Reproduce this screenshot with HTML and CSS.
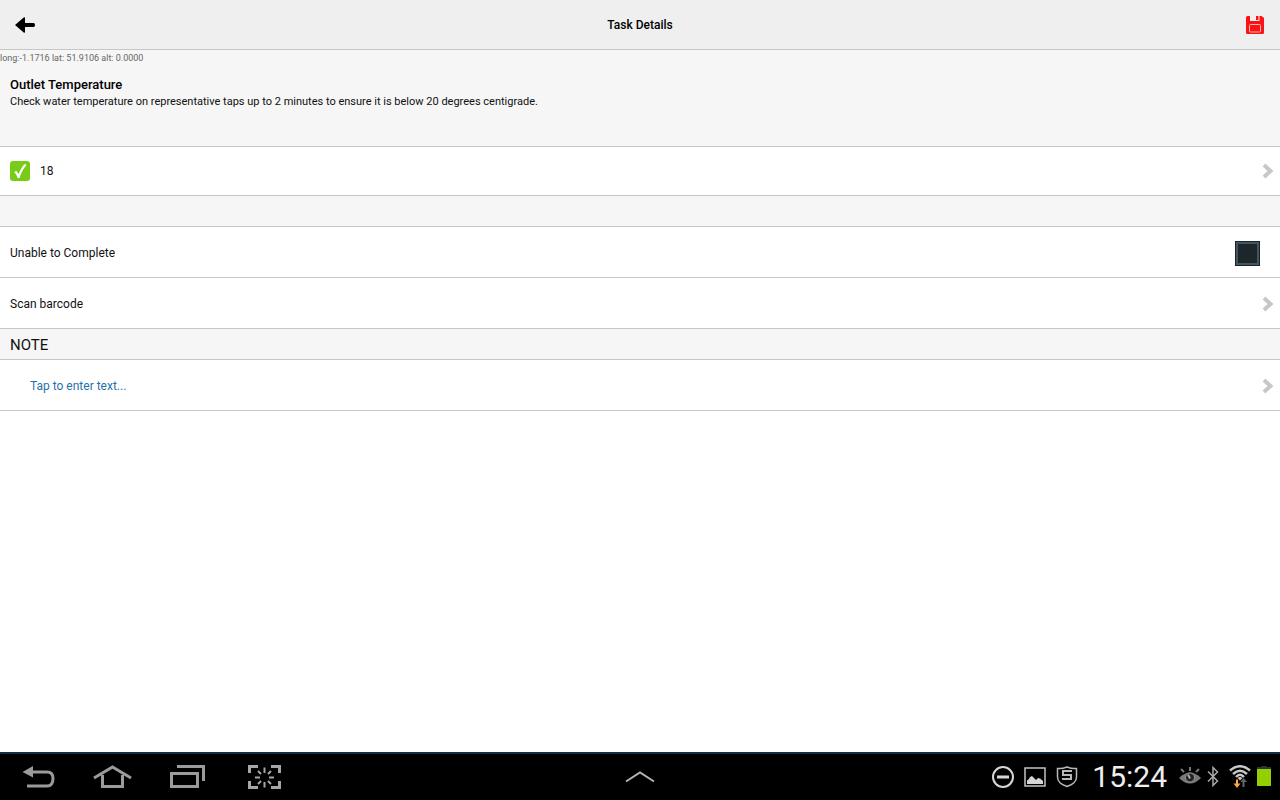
FILE: index.html
```
<!DOCTYPE html>
<html lang="en">
<head>
    <meta charset="UTF-8">
    <meta name="viewport" content="width=device-width, initial-scale=1.0">
    <title>Task Details</title>
    <link rel="stylesheet" href="styles.css">
</head>
<body>
    <header class="header">
        <button type="button" class="icon-button" aria-label="Back">
            <svg width="20" height="16" viewBox="0 0 20 16">
                <path d="M0 8 L9 0.3 Q10 0 10 1 V6 H18.5 Q20 6 20 8 T18.5 10 H10 V15 Q10 16 9 15.7 Z" fill="#000"/>
            </svg>
        </button>
        <h1>Task Details</h1>
        <button type="button" class="icon-button save" aria-label="Save">
            <svg width="20" height="20" viewBox="0 0 20 20">
                <path d="M2.5 1 H5 V6 H14.5 V1 H16.5 L19 3 V17.5 Q19 19 17.5 19 H2.5 Q1 19 1 17.5 V2.5 Q1 1 2.5 1 Z" fill="#fb1316"/>
                <path d="M11 1 H13.5 V5 H11 Z" fill="#fb1316"/>
                <rect x="4.5" y="9.5" width="11" height="7.5" rx="1" fill="none" stroke="#ffb9b5"/>
            </svg>
        </button>
    </header>

    <main>
        <section class="task">
            <p class="location">long:-1.1716 lat: 51.9106 alt: 0.0000</p>
            <h2>Outlet Temperature</h2>
            <p class="description">Check water temperature on representative taps up to 2 minutes to ensure it is below 20 degrees centigrade.</p>
        </section>

        <button type="button" class="row reading">
            <svg class="tick" width="20" height="20" viewBox="0 0 20 20">
                <rect width="20" height="20" rx="3" fill="#78cc18"/>
                <path d="M4 11 L6.5 10 L8.5 13 C10 9 12 6 14.5 3 L16.5 4 C13 8 11 12 9.5 17 H7.5 C7 14.5 6 12.5 4 11 Z" fill="#fff"/>
            </svg>
            <span class="row-text">18</span>
            <svg class="chevron" width="12" height="16" viewBox="0 0 12 16">
                <path d="M2 2 L8.5 8 L2 14" fill="none" stroke="#c7c7c7" stroke-width="4"/>
            </svg>
        </button>

        <div class="spacer"></div>

        <div class="row">
            <label class="row-text" for="unable">Unable to Complete</label>
            <input type="checkbox" id="unable" class="checkbox">
        </div>
        <button type="button" class="row">
            <span class="row-text">Scan barcode</span>
            <svg class="chevron" width="12" height="16" viewBox="0 0 12 16">
                <path d="M2 2 L8.5 8 L2 14" fill="none" stroke="#c7c7c7" stroke-width="4"/>
            </svg>
        </button>

        <h2 class="section-title">NOTE</h2>
        <button type="button" class="row note">
            <span class="row-text">Tap to enter text...</span>
            <svg class="chevron" width="12" height="16" viewBox="0 0 12 16">
                <path d="M2 2 L8.5 8 L2 14" fill="none" stroke="#c7c7c7" stroke-width="4"/>
            </svg>
        </button>
    </main>

    <footer class="system-bar">
        <nav class="nav-keys">
            <button type="button" aria-label="Back">
                <svg width="40" height="26" viewBox="0 0 40 26" fill="none" stroke="#9b9b9b" stroke-width="3">
                    <path d="M13 8 H29 C34 8 35 11 35 14.5 C35 19 33 22 29 22 H9"/>
                    <path d="M4.5 8 L15 2 V13.5 Z" fill="#9b9b9b" stroke="none"/>
                </svg>
            </button>
            <button type="button" aria-label="Home">
                <svg width="40" height="26" viewBox="0 0 40 26" fill="none" stroke="#9b9b9b" stroke-width="3">
                    <path d="M1 14 L19.5 3 L38 14"/>
                    <path d="M9.5 11 V22.5 H29.5 V11"/>
                </svg>
            </button>
            <button type="button" aria-label="Recent apps">
                <svg width="40" height="26" viewBox="0 0 40 26" fill="none" stroke="#9b9b9b" stroke-width="3">
                    <path d="M3.5 9.5 H29.5 V22.5 H3.5 Z"/>
                    <path d="M9 2.5 H35.5 V17"/>
                </svg>
            </button>
            <button type="button" aria-label="Screenshot">
                <svg width="40" height="26" viewBox="0 0 40 26" fill="none" stroke="#a6a6a6" stroke-width="3">
                    <path d="M6.5 9 V2.5 H15 M28 2.5 H36.5 V9 M36.5 17 V23.5 H28 M15 23.5 H6.5 V17"/>
                    <path d="M21.5 3.5 V9 M21.5 18 V23.5 M12 13.5 H17 M26 13.5 H31 M15 7 L18 10 M28 7 L25 10 M15 20 L18 17 M28 20 L25 17" stroke-width="2"/>
                </svg>
            </button>
        </nav>

        <button type="button" class="expand" aria-label="Show mini apps">
            <svg width="30" height="12" viewBox="0 0 30 12">
                <path d="M1 10.5 L15 1.5 L29 10.5" fill="none" stroke="#b4b4b4" stroke-width="2"/>
            </svg>
        </button>

        <div class="status">
            <svg width="22" height="24" viewBox="0 0 22 24" fill="none" stroke="#d6d6d6">
                <circle cx="11" cy="12" r="10" stroke-width="2"/>
                <path d="M5 12 H17" stroke-width="3"/>
            </svg>
            <svg width="22" height="24" viewBox="0 0 22 24">
                <rect x="1" y="3" width="20" height="18" fill="none" stroke="#c4c4c4" stroke-width="1.5"/>
                <path d="M3 19 V15.500 L5 14 L6 12 L8 11 L10 13 L12 15 L14 13 L16 13.500 L19 16 V19 Z" fill="#d6d6d6"/>
            </svg>
            <svg width="22" height="24" viewBox="0 0 22 24" fill="none" stroke="#b8b8b8">
                <path d="M1.500 3.500 Q6 4 11 2 Q16 4 20.500 3.500 V12 C20.500 17 17 19 11 21.500 C5 19 1.500 17 1.500 12 Z" stroke-width="1.500"/>
                <path d="M16 6 H7 V10 H15 V14 H6" stroke-width="2"/>
            </svg>
            <time class="clock">15:24</time>
            <svg width="22" height="24" viewBox="0 0 22 24" fill="none" stroke="#777">
                <path d="M0 13 Q11 2 22 13 Q11 24 0 13 Z" fill="#777" stroke="none"/>
                <circle cx="11" cy="12.5" r="4.5" fill="#222" stroke="#999"/>
                <path d="M11 13.5 L9 9.5" stroke="#aaa" stroke-width="2"/>
                <path d="M2 4 L5 7 M11 2 V6 M20 4 L17 7" stroke-width="2"/>
            </svg>
            <svg class="bluetooth" width="12" height="24" viewBox="0 0 12 24">
                <path d="M1 6.500 L10.500 16 L6 20.500 V2.500 L10.500 7 L1 16.500" fill="none" stroke="#a8a8a8" stroke-width="1.5"/>
            </svg>
            <svg class="wifi" width="22" height="24" viewBox="0 0 22 24" fill="none" stroke="#c8c8c8" stroke-width="2.5">
                <path d="M1 5.500 Q11 -3 21 5.500 M4 9 Q11 2.500 18 9 M7 12 Q11 7.500 15 12"/>
                <path d="M8.500 13 Q11 11 13.500 13 L11 15.500 Z" fill="#c8c8c8" stroke="none"/>
                <path d="M8 14.500 V20" stroke="#ffa840" stroke-width="2"/>
                <path d="M4.500 18.500 H11.500 L8 23 Z" fill="#ffa840" stroke="none"/>
                <path d="M14.500 22 V16" stroke="#666" stroke-width="2"/>
                <path d="M11.500 17 L14.500 13 L18 17 Z" fill="#666" stroke="none"/>
            </svg>
            <svg width="14" height="24" viewBox="0 0 14 24">
                <path d="M4 1 H10 V2 H14 V5 H0 V2 H4 Z" fill="#333"/>
                <rect y="4" width="14" height="17" fill="#92d000"/>
            </svg>
        </div>
    </footer>
</body>
</html>
```
FILE: styles.css
```
:root {
    --border-color: #c6c6c6;
    --panel-color: #f6f6f6;
    --link-color: #1f72ad;
}

* {
    box-sizing: border-box;
}

body {
    font-family: Roboto, "Liberation Sans", sans-serif;
    font-size: 12px;
    line-height: 16px;
    color: #111;
    background-color: #fff;
    margin: 0;
    min-height: 100vh;
    display: flex;
    flex-direction: column;
}

main {
    flex: 1;
}

h1, h2, p {
    margin: 0;
}

button {
    font: inherit;
    color: inherit;
    background: none;
    border: none;
    padding: 0;
    cursor: pointer;
}

svg {
    display: block;
    flex-shrink: 0;
}

.header {
    display: grid;
    grid-template-columns: 1fr auto 1fr;
    align-items: center;
    height: 50px;
    padding: 0 15px;
    background-color: #efefef;
    border-bottom: 1px solid var(--border-color);
}

.header h1 {
    font-size: 12px;
    font-weight: 500;
    color: #000;
}

.icon-button {
    justify-self: start;
}

.icon-button.save {
    justify-self: end;
}

.task {
    background-color: var(--panel-color);
    height: 97px;
    border-bottom: 1px solid var(--border-color);
}

.task h2 {
    font-size: 13px;
    font-weight: 500;
    color: #000;
    padding: 0 10px;
    margin-top: 11px;
}

.location {
    font-size: 9px;
    color: #666;
}

.description {
    font-size: 11px;
    line-height: 18px;
    padding: 0 10px;
}

/* List rows */
.row {
    display: flex;
    align-items: center;
    width: 100%;
    height: 51px;
    padding: 2px 6px 0 10px;
    background-color: #fff;
    border-bottom: 1px solid var(--border-color);
    text-align: left;
}

.row-text {
    flex: 1;
}

.reading {
    height: 49px;
    padding-top: 0;
}

.tick {
    margin-right: 10px;
}

.note {
    padding-left: 30px;
    color: var(--link-color);
}

.spacer {
    height: 31px;
    background-color: var(--panel-color);
    border-bottom: 1px solid var(--border-color);
}

.section-title {
    height: 31px;
    padding: 0 10px;
    font-size: 15px;
    font-weight: 400;
    line-height: 32px;
    background-color: var(--panel-color);
    border-bottom: 1px solid var(--border-color);
}

.checkbox {
    appearance: none;
    width: 25px;
    height: 25px;
    margin: 0 14px 0 0;
    background-color: #1d262b;
    border: 1px solid #15242d;
    box-shadow: inset 0 0 0 2px #46545d;
}

.checkbox:checked {
    background-color: #78cc18;
}

/* Tablet system bar */
.system-bar {
    display: grid;
    grid-template-columns: 1fr auto 1fr;
    align-items: center;
    height: 48px;
    padding: 0 9px;
    background-color: #000;
    border-top: 2px solid #152d40;
}

.nav-keys {
    display: flex;
    gap: 35px;
    padding-left: 9px;
}

.status {
    display: flex;
    align-items: center;
    justify-content: flex-end;
    gap: 10px;
}

.clock {
    font-size: 30px;
    line-height: 46px;
    color: #eee;
    margin: 0 2px 0 4px;
}

.bluetooth {
    margin-left: -4px;
}

.wifi {
    margin-right: -4px;
}
```
